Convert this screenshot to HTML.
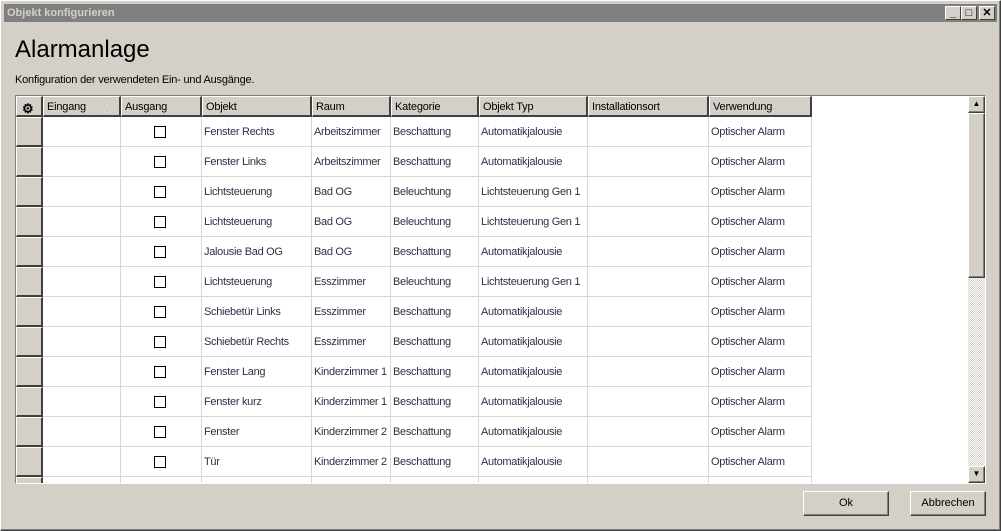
<!DOCTYPE html><html><head><style>
*{margin:0;padding:0;box-sizing:border-box}
body{width:1001px;height:531px;background:#d4d0c8;font-family:"Liberation Sans",sans-serif;font-size:11px;position:relative;overflow:hidden}
.a{position:absolute}
.win{left:0;top:0;width:1001px;height:531px;border:1px solid #fff;border-right-color:#404040;border-bottom-color:#404040;box-shadow:inset -1px -1px 0 #808080,inset 1px 1px 0 #d4d0c8}
.tb{left:4px;top:4px;width:993px;height:18px;background:#808080;color:#d4d0c8;font-weight:bold;font-size:11px;padding:3px 3px}
.cb{top:6px;width:16px;height:14px;background:#d4d0c8;border:1px solid #fff;border-right-color:#404040;border-bottom-color:#404040;font-size:11px;font-weight:bold;text-align:center;line-height:12px;color:#000}
.grid{left:15px;top:95px;width:971px;height:389px;border:1px solid #808080;border-right-color:#fff;border-bottom-color:#fff;background:#fff;overflow:hidden}
.hd{position:absolute;top:0;height:21px;background:#d4d0c8;border-top:1px solid #fff;border-left:1px solid #fff;border-right:2px solid #404040;border-bottom:2px solid #404040;padding:4px 3px 0;color:#000;letter-spacing:-0.2px}
.rh{position:absolute;left:0;width:27px;height:30px;background:#d4d0c8;border:1px solid #fff;border-right:2px solid #404040;border-bottom:2px solid #404040}
.c{position:absolute;height:30px;border-right:1px solid #d8d8d8;border-bottom:1px solid #d8d8d8;padding:9px 2px;color:#2b3245;white-space:nowrap;overflow:hidden;letter-spacing:-0.3px}
.chk{position:absolute;width:12px;height:12px;border:1px solid #000;background:#fff}
.btn{height:25px;background:#d4d0c8;border:1px solid #fff;border-right-color:#404040;border-bottom-color:#404040;box-shadow:inset -1px -1px 0 #808080;text-align:center;line-height:23px;color:#000}
</style></head><body>
<div class="a win"></div>
<div class="a tb">Objekt konfigurieren</div>
<div class="a cb" style="left:945px">_</div>
<div class="a cb" style="left:961px">□</div>
<div class="a cb" style="left:979px">✕</div>
<div class="a" style="left:15px;top:36px;font-size:24px;color:#000">Alarmanlage</div>
<div class="a" style="left:15px;top:74px;color:#000;letter-spacing:-0.2px">Konfiguration der verwendeten Ein- und Ausgänge.</div>
<div class="a grid" id="g"></div>
<div class="a btn" style="left:803px;top:491px;width:86px">Ok</div>
<div class="a btn" style="left:910px;top:491px;width:76px">Abbrechen</div>
<script>
var g=document.getElementById('g');var h='';
var cols=[[0,27,'<span style="font-size:13px;font-weight:bold;margin-left:2px">⚙</span>'],[27,78,'Eingang<span style="position:absolute;right:8px;color:#fff;text-shadow:0 0 1px #888">△</span>'],[105,81,'Ausgang'],[186,110,'Objekt'],[296,79,'Raum'],[375,88,'Kategorie'],[463,109,'Objekt Typ'],[572,121,'Installationsort'],[693,103,'Verwendung']];
cols.forEach(function(c){h+='<div class="hd" style="left:'+c[0]+'px;width:'+c[1]+'px">'+c[2]+'</div>';});
var rows=[["Fenster Rechts","Arbeitszimmer","Beschattung","Automatikjalousie"],["Fenster Links","Arbeitszimmer","Beschattung","Automatikjalousie"],["Lichtsteuerung","Bad OG","Beleuchtung","Lichtsteuerung Gen 1"],["Lichtsteuerung","Bad OG","Beleuchtung","Lichtsteuerung Gen 1"],["Jalousie Bad OG","Bad OG","Beschattung","Automatikjalousie"],["Lichtsteuerung","Esszimmer","Beleuchtung","Lichtsteuerung Gen 1"],["Schiebetür Links","Esszimmer","Beschattung","Automatikjalousie"],["Schiebetür Rechts","Esszimmer","Beschattung","Automatikjalousie"],["Fenster Lang","Kinderzimmer 1","Beschattung","Automatikjalousie"],["Fenster kurz","Kinderzimmer 1","Beschattung","Automatikjalousie"],["Fenster","Kinderzimmer 2","Beschattung","Automatikjalousie"],["Tür","Kinderzimmer 2","Beschattung","Automatikjalousie"],["","","",""]];
rows.forEach(function(r,i){var y=21+i*30;
h+='<div class="rh" style="top:'+y+'px"></div>';
var v=[ '', '', r[0],r[1],r[2],r[3],'', i<12?'Optischer Alarm':''];
for(var k=1;k<9;k++){var c=cols[k];h+='<div class="c" style="left:'+c[0]+'px;top:'+y+'px;width:'+c[1]+'px">'+(v[k-1]||'')+'</div>';}
if(i<12)h+='<div class="chk" style="left:138px;top:'+(y+9)+'px"></div>';
});
h+='<div style="position:absolute;left:952px;top:0;width:17px;height:387px;background:repeating-conic-gradient(#d4d0c8 0 25%,#fff 0 50%) 0 0/2px 2px"></div>';
h+='<div class="btn" style="position:absolute;left:952px;top:0;width:17px;height:17px;line-height:14px;font-size:8px">▲</div>';
h+='<div class="btn" style="position:absolute;left:952px;top:17px;width:17px;height:165px"></div>';
h+='<div class="btn" style="position:absolute;left:952px;top:370px;width:17px;height:17px;line-height:14px;font-size:8px">▼</div>';
g.innerHTML=h;
</script>
</body></html>
